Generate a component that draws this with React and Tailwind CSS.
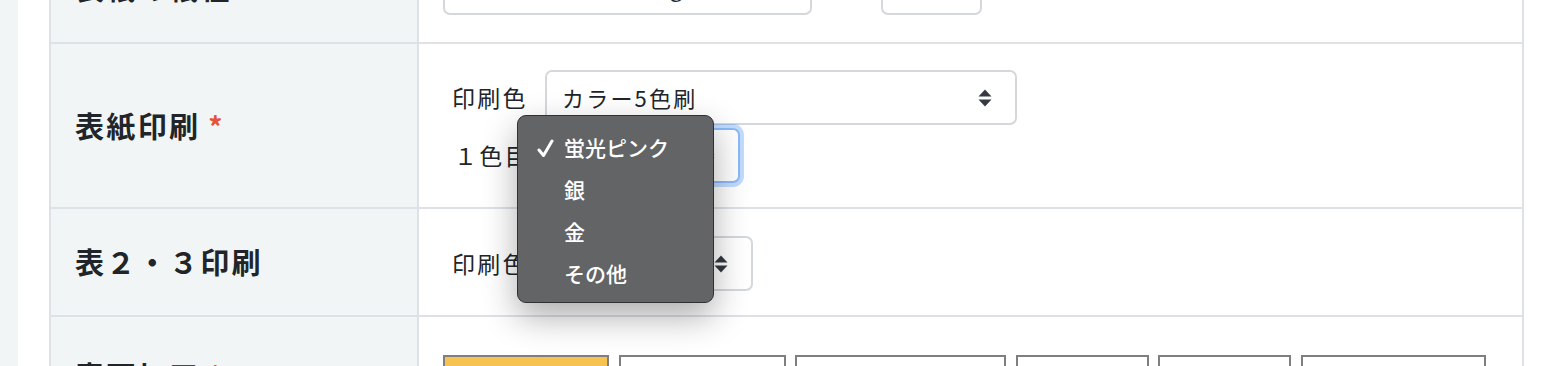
import React from 'react';

const font = { fontFamily: '"Noto Sans CJK JP", "Noto Sans", sans-serif' };

function Arrows() {
  return (
    <svg width="16" height="20" viewBox="0 0 16 20" className="shrink-0">
      <path d="M8 1.5 L14.5 8.5 H1.5 Z" fill="#343a40" />
      <path d="M8 18.5 L14.5 11.5 H1.5 Z" fill="#343a40" />
    </svg>
  );
}

function Check() {
  return (
    <svg width="17" height="19" viewBox="0 0 17 19">
      <path
        d="M2 11 L6.5 16.5 L15 2"
        fill="none"
        stroke="#ffffff"
        strokeWidth="3"
        strokeLinecap="round"
        strokeLinejoin="round"
      />
    </svg>
  );
}

function Select({ width, value, focused, arrows = true }) {
  return (
    <div
      className={`flex items-center justify-between h-[55px] rounded-[7px] border-2 bg-white pl-[15px] pr-[22px] text-[22px] tracking-[0.1em] text-[#212529] ${
        focused
          ? 'border-[#8bb9fb] ring-4 ring-[#0d6efd]/25'
          : 'border-[#d4d8dc]'
      } ${width}`}
    >
      <span className="whitespace-nowrap">{value}</span>
      {arrows && <Arrows />}
    </div>
  );
}

const menuItems = ['蛍光ピンク', '銀', '金', 'その他'];

const finishes = [
  { label: 'グロスPP', w: 'w-[166px]', active: true },
  { label: 'マットPP', w: 'w-[167px]' },
  { label: 'ホログラムPP', w: 'w-[211px]' },
  { label: 'なし', w: 'w-[133px]' },
  { label: 'ニス', w: 'w-[133px]' },
  { label: 'エンボスPP', w: 'w-[185px]' },
];

function Label({ children, required }) {
  return (
    <div className="w-[368px] shrink-0 bg-[#f2f5f6] border-r-2 border-[#dee2e6] flex items-center pl-[24px] text-[29px] font-bold tracking-[0.08em] text-[#212529]">
      <span>{children}</span>
      {required && <span className="ml-[8px] text-[#e5533d] text-[28px]">*</span>}
    </div>
  );
}

export default function App() {
  return (
    <div className="flex h-[366px] overflow-hidden bg-white" style={font}>
      <div className="w-[18px] shrink-0 bg-[#f2f5f6]" />
      <div className="w-[31px] shrink-0" />

      <div className="w-[1475px] shrink-0 -mt-[67px] border-l-2 border-r-2 border-[#dee2e6]">
        {/* 表紙の紙種 */}
        <div className="flex border-b-2 border-[#dee2e6]">
          <Label>表紙の紙種</Label>
          <div className="flex-1 flex items-center gap-[69px] pl-[24px] py-[27px]">
            <Select width="w-[369px]" value="マットコート 135kg" />
            <Select width="w-[101px]" value="" arrows={false} />
          </div>
        </div>

        {/* 表紙印刷 */}
        <div className="flex border-b-2 border-[#dee2e6]">
          <Label required>表紙印刷</Label>
          <div className="flex-1 flex flex-col gap-[3px] pl-[33px] pt-[26px] pb-[24px] text-[23px] tracking-[0.1em] text-[#212529]">
            <div className="flex items-center">
              <span className="w-[93px]">印刷色</span>
              <Select width="w-[472px]" value="カラー5色刷" />
            </div>
            <div className="flex items-center">
              <span className="w-[93px] pl-[2px]">１色目</span>
              <div className="relative">
                <Select width="w-[195px]" value="蛍光ピンク" focused />
                {/* open native menu */}
                <div className="absolute left-[-28px] top-[-13px] w-[197px] h-[188px] rounded-[9px] border border-[#2f3133] bg-[#626466] shadow-[0_14px_34px_rgba(0,0,0,0.32)] pt-[11px] text-white text-[21px] font-medium tracking-normal">
                  {menuItems.map((item, i) => (
                    <div key={item} className="flex items-center h-[42px]">
                      <span className="w-[46px] pl-[19px] flex items-center">
                        {i === 0 && <Check />}
                      </span>
                      <span>{item}</span>
                    </div>
                  ))}
                </div>
              </div>
            </div>
          </div>
        </div>

        {/* 表２・３印刷 */}
        <div className="flex border-b-2 border-[#dee2e6]">
          <Label>表２・３印刷</Label>
          <div className="flex-1 flex items-center pl-[33px] pt-[27px] pb-[24px] text-[23px] tracking-[0.1em] text-[#212529]">
            <span className="w-[93px]">印刷色</span>
            <Select width="w-[208px]" value="なし" />
          </div>
        </div>

        {/* 表面加工 */}
        <div className="flex">
          <div className="w-[368px] shrink-0 bg-[#f2f5f6] border-r-2 border-[#dee2e6] pl-[24px] pt-[37px] text-[29px] font-bold tracking-[0.08em] text-[#212529]">
            表面加工<span className="ml-[8px] text-[#e5533d] text-[28px]">*</span>
          </div>
          <div className="flex-1 flex gap-[9.6px] pl-[24px] pt-[38px] pb-[30px]">
            {finishes.map((f) => (
              <div
                key={f.label}
                className={`${f.w} shrink-0 h-[56px] border-2 border-[#7f7f7f] flex items-center justify-center text-[20px] text-[#212529] ${
                  f.active ? 'bg-[#f6c350]' : 'bg-white'
                }`}
              >
                {f.label}
              </div>
            ))}
          </div>
        </div>
      </div>
    </div>
  );
}
